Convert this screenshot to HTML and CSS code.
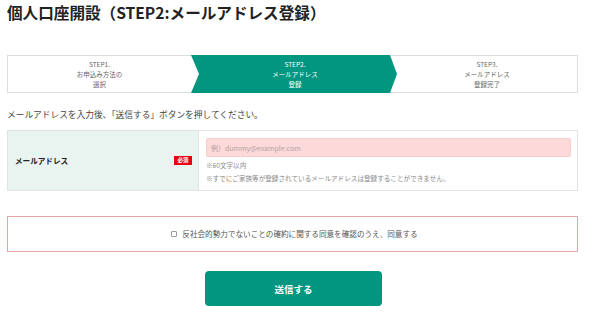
FILE: index.html
```html
<!DOCTYPE html>
<html lang="ja">
<head>
<meta charset="utf-8">
<title>個人口座開設（STEP2:メールアドレス登録）</title>
<link rel="stylesheet" href="styles.css">
</head>
<body>
<div class="page">
  <h1 class="title">個人口座開設（STEP2:メールアドレス登録）</h1>

  <ol class="steps">
    <li class="step step-done"><span>STEP1.</span><span>お申込み方法の</span><span>選択</span></li>
    <li class="step step-current"><span>STEP2.</span><span>メールアドレス</span><span>登録</span></li>
    <li class="step step-next"><span>STEP3.</span><span>メールアドレス</span><span>登録完了</span></li>
  </ol>

  <p class="lead">メールアドレスを入力後、「送信する」ボタンを押してください。</p>

  <div class="form-table">
    <div class="label-cell">
      <span class="label-text">メールアドレス</span>
      <span class="badge">必須</span>
    </div>
    <div class="field-cell">
      <input class="email-input" type="text" placeholder="例）dummy@example.com">
      <p class="note note-first">※60文字以内</p>
      <p class="note">※すでにご家族等が登録されているメールアドレスは登録することができません。</p>
    </div>
  </div>

  <div class="agree-box">
    <label class="agree-label"><input class="agree-check" type="checkbox"><span>反社会的勢力でないことの確約に関する同意を確認のうえ、同意する</span></label>
  </div>

  <div class="actions">
    <button class="submit-btn" type="button">送信する</button>
  </div>
</div>
</body>
</html>
```

FILE: styles.css
```css
* { box-sizing: border-box; }

html, body {
  margin: 0;
  padding: 0;
  background: #ffffff;
}

body {
  font-family: "Noto Sans CJK JP", "Noto Sans", "Liberation Sans", sans-serif;
  color: #333333;
}

.page {
  width: 571px;
  margin-left: 7px;
}

.title {
  margin: 0;
  padding-top: 2px;
  font-size: 15.6px;
  line-height: 20px;
  font-weight: 700;
  color: #222222;
}

.steps {
  list-style: none;
  margin: 33px 0 0;
  padding: 0;
  height: 38px;
  border: 1px solid #dddddd;
  display: grid;
  grid-template-columns: 183px 206px 1fr;
}

.step {
  display: flex;
  flex-direction: column;
  align-items: center;
  justify-content: center;
  font-size: 6.5px;
  line-height: 10px;
  color: #666666;
}

.step-current {
  margin: -1px 0;
  background: #00967f;
  color: #ffffff;
  clip-path: polygon(0 0, calc(100% - 7px) 0, 100% 50%, calc(100% - 7px) 100%, 0 100%, 8px 50%);
  padding-left: 2px;
}

.lead {
  margin: 16px 0 0;
  font-size: 8.7px;
  line-height: 12px;
  color: #444444;
}

.form-table {
  margin-top: 9px;
  border: 1px solid #e3e3e3;
  display: grid;
  grid-template-columns: 191px 1fr;
}

.label-cell {
  background: #e9f3f0;
  border-right: 1px solid #e3e3e3;
  display: flex;
  align-items: center;
  justify-content: space-between;
  padding: 0 6px 0 7px;
}

.label-text {
  font-size: 7.6px;
  font-weight: 700;
  color: #222222;
}

.badge {
  width: 18px;
  height: 9px;
  background: #e60012;
  color: #ffffff;
  font-size: 5.5px;
  line-height: 9px;
  font-weight: 700;
  text-align: center;
}

.field-cell {
  padding: 7px 6px 5px 7px;
}

.email-input {
  display: block;
  width: 100%;
  height: 19px;
  margin: 0;
  padding: 0 4px;
  border: 1px solid #f6cccc;
  border-radius: 2px;
  background: #fdd9d9;
  font-family: inherit;
  font-size: 7px;
  color: #333333;
  outline: none;
}

.email-input::placeholder {
  color: #b3a2a2;
}

.note {
  margin: 0;
  font-size: 6.6px;
  line-height: 13px;
  color: #8a8a8a;
}

.note-first {
  margin-top: 2px;
}

.agree-box {
  margin-top: 25px;
  height: 36px;
  border: 1px solid #e2a3aa;
  display: flex;
  align-items: center;
  justify-content: center;
}

.agree-label {
  display: flex;
  align-items: center;
  gap: 5px;
  font-size: 7.6px;
  line-height: 10px;
  color: #555555;
  padding-left: 4px;
}

.agree-check {
  appearance: none;
  -webkit-appearance: none;
  width: 6px;
  height: 6px;
  margin: 0;
  border: 1px solid #999999;
  border-radius: 1px;
  background: #ffffff;
}

.actions {
  margin-top: 19px;
  display: flex;
  justify-content: center;
}

.submit-btn {
  width: 177px;
  height: 35px;
  border: none;
  border-radius: 4px;
  background: #00967f;
  color: #ffffff;
  font-family: inherit;
  font-size: 9.5px;
  font-weight: 700;
  padding: 0;
  margin-left: 2px;
}
```
